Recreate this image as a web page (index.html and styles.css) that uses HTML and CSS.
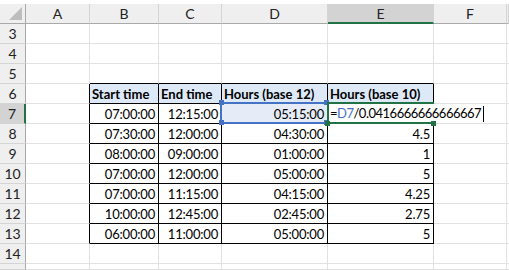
FILE: index.html
```html
<!DOCTYPE html>
<html lang="en">

<head>
    <meta charset="UTF-8">
    <title>Hours</title>
    <link rel="stylesheet" href="styles.css">
</head>

<body>
    <div class="sheet">
        <!-- column headers -->
        <div class="corner"><span class="tri"></span></div>
        <div class="col-head">A</div>
        <div class="col-head">B</div>
        <div class="col-head">C</div>
        <div class="col-head">D</div>
        <div class="col-head active">E</div>
        <div class="col-head">F</div>
        <div class="col-head"></div>

        <!-- row 3 -->
        <div class="row-head">3</div>
        <div class="cell"></div><div class="cell"></div><div class="cell"></div><div class="cell"></div><div class="cell"></div><div class="cell"></div><div class="cell"></div>
        <!-- row 4 -->
        <div class="row-head">4</div>
        <div class="cell"></div><div class="cell"></div><div class="cell"></div><div class="cell"></div><div class="cell"></div><div class="cell"></div><div class="cell"></div>
        <!-- row 5 -->
        <div class="row-head">5</div>
        <div class="cell"></div><div class="cell above"></div><div class="cell above"></div><div class="cell above"></div><div class="cell above"></div><div class="cell"></div><div class="cell"></div>

        <!-- row 6: table header -->
        <div class="row-head">6</div>
        <div class="cell before"></div>
        <div class="cell tb th">Start time</div>
        <div class="cell tb th">End time</div>
        <div class="cell tb th">Hours (base 12)</div>
        <div class="cell tb th">Hours (base 10)</div>
        <div class="cell"></div><div class="cell"></div>

        <!-- row 7: editing E7 -->
        <div class="row-head active">7</div>
        <div class="cell before"></div>
        <div class="cell tb num">07:00:00</div>
        <div class="cell tb num">12:15:00</div>
        <div class="cell tb num ref">05:15:00</div>
        <div class="cell tb editing">
            <span class="editor">=<span class="ref-text">D7</span>/0.0416666666666667<i class="caret"></i></span>
        </div>
        <div class="cell"></div><div class="cell"></div>

        <div class="row-head">8</div>
        <div class="cell before"></div>
        <div class="cell tb num">07:30:00</div>
        <div class="cell tb num">12:00:00</div>
        <div class="cell tb num">04:30:00</div>
        <div class="cell tb num">4.5</div>
        <div class="cell"></div><div class="cell"></div>

        <div class="row-head">9</div>
        <div class="cell before"></div>
        <div class="cell tb num">08:00:00</div>
        <div class="cell tb num">09:00:00</div>
        <div class="cell tb num">01:00:00</div>
        <div class="cell tb num">1</div>
        <div class="cell"></div><div class="cell"></div>

        <div class="row-head">10</div>
        <div class="cell before"></div>
        <div class="cell tb num">07:00:00</div>
        <div class="cell tb num">12:00:00</div>
        <div class="cell tb num">05:00:00</div>
        <div class="cell tb num">5</div>
        <div class="cell"></div><div class="cell"></div>

        <div class="row-head">11</div>
        <div class="cell before"></div>
        <div class="cell tb num">07:00:00</div>
        <div class="cell tb num">11:15:00</div>
        <div class="cell tb num">04:15:00</div>
        <div class="cell tb num">4.25</div>
        <div class="cell"></div><div class="cell"></div>

        <div class="row-head">12</div>
        <div class="cell before"></div>
        <div class="cell tb num">10:00:00</div>
        <div class="cell tb num">12:45:00</div>
        <div class="cell tb num">02:45:00</div>
        <div class="cell tb num">2.75</div>
        <div class="cell"></div><div class="cell"></div>

        <div class="row-head">13</div>
        <div class="cell before"></div>
        <div class="cell tb num">06:00:00</div>
        <div class="cell tb num">11:00:00</div>
        <div class="cell tb num">05:00:00</div>
        <div class="cell tb num">5</div>
        <div class="cell"></div><div class="cell"></div>

        <div class="row-head">14</div>
        <div class="cell"></div><div class="cell"></div><div class="cell"></div><div class="cell"></div><div class="cell"></div><div class="cell"></div><div class="cell"></div>

        <!-- last row only peeks in at the bottom -->
        <div class="row-head"></div>
        <div class="cell"></div><div class="cell"></div><div class="cell"></div><div class="cell"></div><div class="cell"></div><div class="cell"></div><div class="cell"></div>
    </div>
</body>

</html>
```

FILE: styles.css
```css
body {
    margin: 0;
    background-color: white;
    font-family: Lato, "Liberation Sans", sans-serif;
    font-size: 13px;
    color: #000;
}

.sheet {
    display: grid;
    grid-template-columns: 26px 64px 69px 63px 106px 106px 73px 2px;
    grid-template-rows: repeat(13, 20px) 6px;
    padding-top: 4px;
    overflow: hidden;
}

.sheet > div {
    box-sizing: border-box;
}

.corner {
    position: relative;
    background-color: #efefef;
    border-right: 1px solid #a9a9a9;
    border-bottom: 1px solid #a9a9a9;
}

.tri {
    position: absolute;
    right: 3px;
    bottom: 3px;
    width: 0;
    height: 0;
    border-left: 13px solid transparent;
    border-bottom: 13px solid #bdbdbd;
}

.col-head {
    background-color: #efefef;
    border-right: 1px solid #d4d4d4;
    border-bottom: 1px solid #a9a9a9;
    text-align: center;
    line-height: 19px;
    font-size: 14px;
    color: #222;
}

.col-head.active {
    background-color: #d3d3d3;
    border-bottom: 2px solid #217346;
}

.row-head {
    background-color: #efefef;
    border-right: 1px solid #a9a9a9;
    border-bottom: 1px solid #d4d4d4;
    text-align: center;
    line-height: 20px;
    font-size: 14px;
    color: #222;
}

.row-head.active {
    background-color: #d3d3d3;
    border-right: 2px solid #217346;
}

.cell {
    border-right: 1px solid #e1e1e1;
    border-bottom: 1px solid #e1e1e1;
    line-height: 20px;
    padding: 0 3px;
    letter-spacing: -0.2px;
    white-space: nowrap;
}

/* black borders round B6:E13 */
.cell.tb {
    border-right-color: #000;
    border-bottom-color: #000;
}

.cell.before {
    border-right-color: #000;
}

.cell.above {
    border-bottom-color: #000;
}

.th {
    background-color: #dde9f6;
    font-weight: bold;
    padding-left: 2px;
    letter-spacing: 0;
    overflow: hidden;
}

.num {
    text-align: right;
}

/* referenced cell D7 */
.ref {
    position: relative;
    background-color: #e6ecf7;
}

.ref::after {
    content: "";
    position: absolute;
    left: -2px;
    top: -2px;
    right: -2px;
    bottom: -1px;
    border: 2px solid #4472c4;
}

.ref::before {
    content: "";
    position: absolute;
    left: -3px;
    top: -4px;
    width: 5px;
    height: 5px;
    background-color: #4472c4;
    box-shadow: 105px 0 0 #4472c4, 0 20px 0 #4472c4, 105px 20px 0 #4472c4;
    z-index: 1;
}

/* cell in edit mode */
.editing {
    position: relative;
    z-index: 2;
    padding: 0;
}

.editing::before {
    content: "";
    position: absolute;
    left: -1px;
    top: -2px;
    right: -1px;
    bottom: -1px;
    border: 2px solid #217346;
}

.editing::after {
    content: "";
    position: absolute;
    left: -3px;
    bottom: -3px;
    width: 5px;
    height: 5px;
    background-color: #217346;
    box-shadow: 106px 0 0 #217346;
}

.editor {
    position: absolute;
    left: 2px;
    top: 0;
    height: 18px;
    padding-right: 2px;
    background-color: white;
    line-height: 19px;
    letter-spacing: -0.5px;
}

.ref-text {
    color: #4472c4;
}

.caret {
    display: inline-block;
    width: 1px;
    height: 16px;
    margin-left: 2px;
    vertical-align: -4px;
    background-color: #000;
}
```
